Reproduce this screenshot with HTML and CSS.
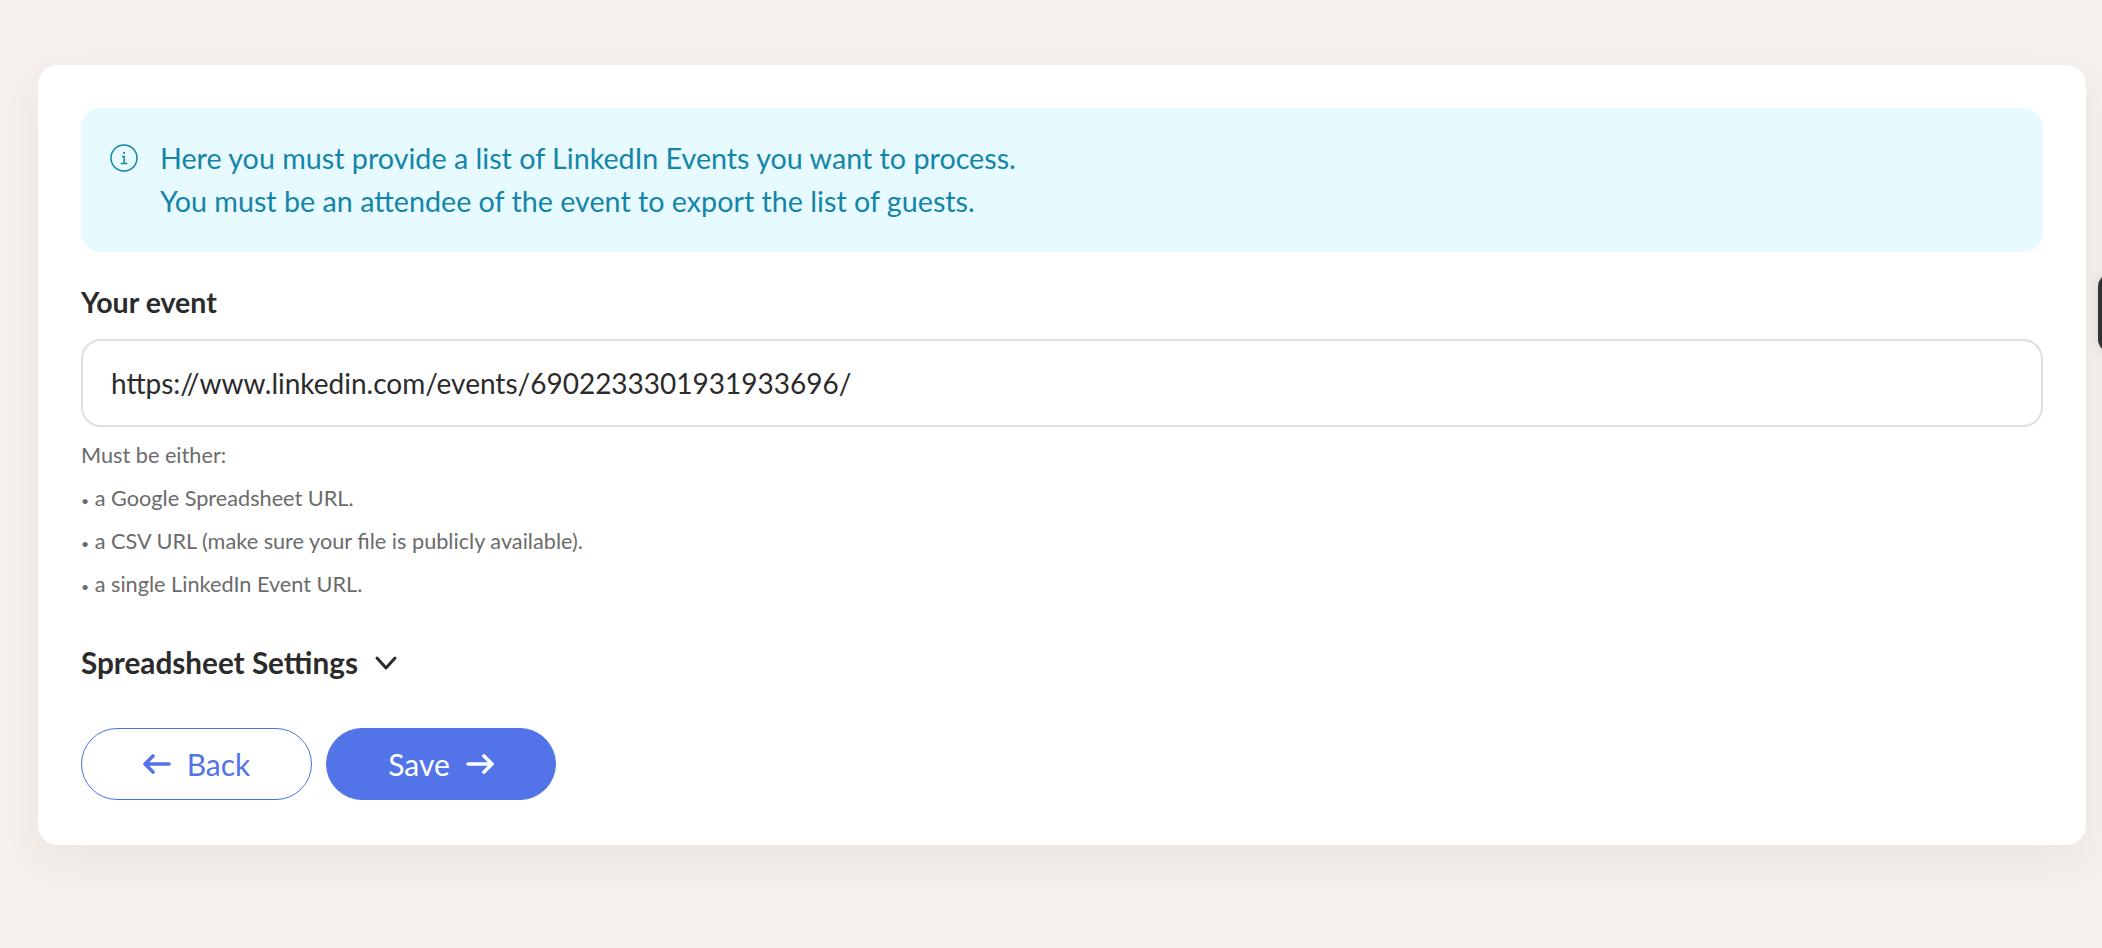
FILE: index.html
```html
<!DOCTYPE html>
<html lang="en">
<head>
<meta charset="utf-8">
<title>LinkedIn Events</title>
<link rel="stylesheet" href="styles.css">
</head>
<body>
<main class="card">
  <div class="alert">
    <svg class="alert-icon" viewBox="0 0 28 28" fill="none" stroke="currentColor" stroke-width="1.5" aria-hidden="true">
      <circle cx="14" cy="14" r="13"/>
      <path d="M12 12.5h2.2v7M10.8 19.5h6.6" stroke-width="1.5"/>
      <path d="M14 8v1.8" stroke-width="2"/>
    </svg>
    <div class="alert-text">
      <div>Here you must provide a list of LinkedIn Events you want to process.</div>
      <div>You must be an attendee of the event to export the list of guests.</div>
    </div>
  </div>
  <label class="field-label" for="event">Your event</label>
  <input class="field-input" id="event" type="text" value="https://www.linkedin.com/events/6902233301931933696/">
  <div class="hint">
    <div>Must be either:</div>
    <div><span class="dot">•</span> a Google Spreadsheet URL.</div>
    <div><span class="dot">•</span> a CSV URL (make sure your file is publicly available).</div>
    <div><span class="dot">•</span> a single LinkedIn Event URL.</div>
  </div>
  <div class="settings">
    <span>Spreadsheet Settings</span>
    <svg class="chevron" viewBox="0 0 24 16" fill="none" stroke="currentColor" stroke-width="3" stroke-linecap="round" stroke-linejoin="round" aria-hidden="true">
      <path d="M3 3l9 10 9-10"/>
    </svg>
  </div>
  <div class="actions">
    <button class="btn btn-outline" type="button">
      <svg class="arrow" viewBox="0 0 28 20" fill="none" stroke="currentColor" stroke-width="3.6" stroke-linecap="round" stroke-linejoin="round" aria-hidden="true"><path d="M26 10H2M10 2l-8 8 8 8"/></svg>
      <span>Back</span>
    </button>
    <button class="btn btn-solid" type="button">
      <span>Save</span>
      <svg class="arrow" viewBox="0 0 28 20" fill="none" stroke="currentColor" stroke-width="3.6" stroke-linecap="round" stroke-linejoin="round" aria-hidden="true"><path d="M2 10h24M18 2l8 8-8 8"/></svg>
    </button>
  </div>
</main>
<div class="side-tab"></div>
</body>
</html>
```
FILE: styles.css
```css
* { box-sizing: border-box; }
html, body { height: 100%; }
body {
  margin: 0;
  padding: 65px 16px 0 38px;
  background: #f5f0ed;
  font-family: "Lato", "Liberation Sans", sans-serif;
  color: #2b2b2b;
  overflow: hidden;
}
.card {
  height: 780px;
  padding: 43px;
  background: #fff;
  border-radius: 20px;
  box-shadow: 0 16px 40px rgba(90, 60, 40, 0.06);
}
.alert {
  display: flex;
  gap: 22px;
  height: 144px;
  padding: 29px 29px;
  background: #e7faff;
  border-radius: 20px;
  color: #1385a8;
}
.alert-icon { flex: none; width: 28px; height: 28px; margin-top: 7px; }
.alert-text { font-size: 28.7px; line-height: 43px; }
.field-label {
  display: block;
  margin-top: 30px;
  font-size: 28.5px;
  font-weight: 700;
  line-height: 40px;
  color: #2b2b2b;
}
.field-input {
  display: block;
  width: 100%;
  height: 88px;
  margin-top: 17px;
  padding: 0 28px;
  border: 2px solid #e0dfdf;
  border-radius: 20px;
  background: #fff;
  font: 400 28px "Lato", "Liberation Sans", sans-serif;
  color: #2b2b2b;
  outline: none;
}
.hint {
  margin-top: 7px;
  font-size: 21.7px;
  line-height: 43px;
  color: #6b6b6b;
}
.dot { font-size: 14px; line-height: 0; }
.settings {
  display: flex;
  align-items: center;
  gap: 16px;
  margin-top: 35px;
  font-size: 29.7px;
  font-weight: 700;
  line-height: 44px;
}
.chevron { width: 24px; height: 16px; }
.actions { display: flex; gap: 14px; margin-top: 43px; }
.btn {
  display: flex;
  align-items: center;
  justify-content: center;
  gap: 16px;
  width: 231px;
  height: 72px;
  border-radius: 36px;
  font: 400 30px "Lato", "Liberation Sans", sans-serif;
  border: 1px solid #4673e0;
}
.btn-outline { background: #fff; color: #5274e8; }
.btn-solid { width: 230px; background: #5274e8; border-color: #5274e8; color: #fff; }
.arrow { width: 28px; height: 20px; }
.side-tab {
  position: absolute;
  left: 2098px;
  top: 273px;
  width: 30px;
  height: 80px;
  border-radius: 14px;
  background: #333;
  box-shadow: 0 0 14px rgba(60, 50, 40, 0.12);
}
```
